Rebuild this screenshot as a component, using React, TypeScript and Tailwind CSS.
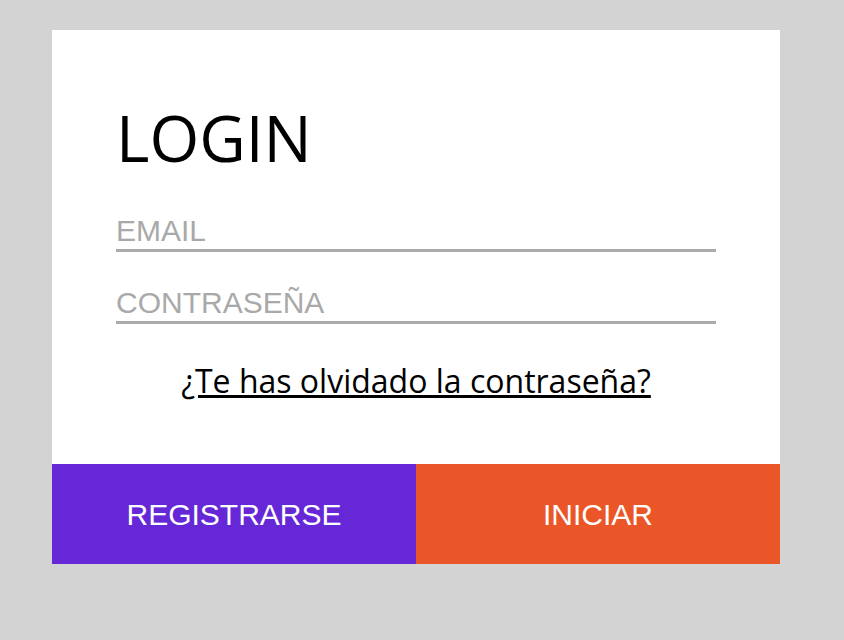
import React from "react";

export default function App() {
  return (
    <div className="min-h-[640px] w-full bg-[#d3d3d3] pt-[30px] pl-[52px]">
      <div className="w-[728px] bg-white flex flex-col">
        <div className="h-[434px] px-[64px] pt-[76px] flex flex-col">
          <h1 className="h-[64px] font-['Open_Sans','Noto_Sans',sans-serif] text-[64px] leading-none text-black">
            LOGIN
          </h1>
          <input
            type="email"
            placeholder="EMAIL"
            className="mt-[42px] h-[40px] w-full border-b-[3px] border-[#aaaaaa] bg-transparent font-['Liberation_Sans',Arial,sans-serif] text-[30px] text-black outline-none placeholder:text-[#a9a9a9]"
          />
          <input
            type="password"
            placeholder="CONTRASEÑA"
            className="mt-[32px] h-[40px] w-full border-b-[3px] border-[#aaaaaa] bg-transparent font-['Liberation_Sans',Arial,sans-serif] text-[30px] text-black outline-none placeholder:text-[#a9a9a9]"
          />
          <a
            href="#"
            className="mt-[33px] self-center font-['Open_Sans','Noto_Sans',sans-serif] text-[32px] text-black underline"
          >
            ¿Te has olvidado la contraseña?
          </a>
        </div>
        <div className="flex h-[100px]">
          <button className="flex-1 bg-[#6628d7] font-['Liberation_Sans',Arial,sans-serif] text-[30px] text-white">
            REGISTRARSE
          </button>
          <button className="flex-1 bg-[#eb5628] font-['Liberation_Sans',Arial,sans-serif] text-[30px] text-white">
            INICIAR
          </button>
        </div>
      </div>
    </div>
  );
}
